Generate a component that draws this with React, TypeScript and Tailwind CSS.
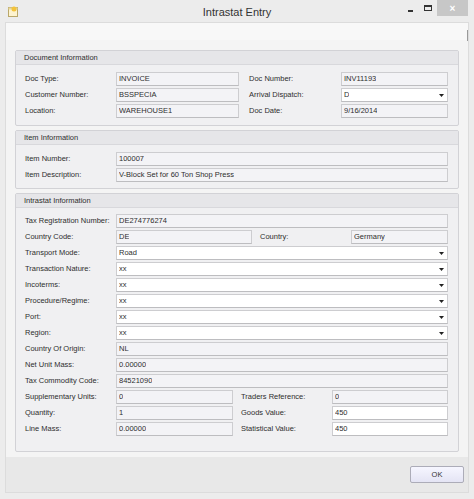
import React from "react";

type Cell = { label: string; value: string; kind?: "ro" | "edit" | "combo"; w?: string; lw?: string; gap?: string };

const font = { fontFamily: '"Liberation Sans", Arial, sans-serif' };

function Field({ value, kind = "ro", className = "" }: { value: string; kind?: "ro" | "edit" | "combo"; className?: string }) {
  const bg = kind === "ro" ? "bg-[#f3f3f6]" : "bg-white";
  return (
    <div className={`relative h-[14px] border border-[#cdcdd0] border-b-[#bdbdc0] ${bg} flex items-center pl-[2px] text-[7.5px] text-[#2e2e2e] ${className}`}>
      <span className="truncate">{value}</span>
      {kind === "combo" && (
        <svg className="absolute right-[3px] top-[5px]" width="5" height="3" viewBox="0 0 5 3">
          <path d="M0 0 L5 0 L2.5 3 Z" fill="#222" />
        </svg>
      )}
    </div>
  );
}

function Label({ text, className = "w-[91px]" }: { text: string; className?: string }) {
  return <div className={`${className} shrink-0 text-[7.5px] text-[#2e2e2e] leading-[14px]`}>{text}</div>;
}

function Row({ label, value, kind }: Cell) {
  return (
    <div className="flex items-center h-[14px]">
      <Label text={label} />
      <Field value={value} kind={kind} className="flex-1" />
    </div>
  );
}

function Pair({ left, right }: { left: Cell; right: Cell }) {
  return (
    <div className="flex items-center h-[14px]">
      <Label text={left.label} />
      <Field value={left.value} kind={left.kind} className={`${left.w} shrink-0`} />
      <Label text={right.label} className={`${right.lw} ${right.gap}`} />
      <Field value={right.value} kind={right.kind} className="flex-1" />
    </div>
  );
}

function Group({ title, children, pt, pb }: { title: string; children: React.ReactNode; pt: string; pb: string }) {
  return (
    <div className="border border-[#d2d2d6] rounded-[2px] bg-[#f0f0f2]">
      <div className="h-[14px] bg-[#e6e6e9] border-b border-[#d8d8dc] pl-[8px] text-[7.5px] text-[#2e2e2e] leading-[14px]">{title}</div>
      <div className={`flex flex-col gap-[2px] pl-[9px] pr-[10px] ${pt} ${pb}`}>{children}</div>
    </div>
  );
}

export default function App() {
  return (
    <div className="w-[474px] h-[499px] bg-[#ececec] flex flex-col" style={font}>
      {/* title bar */}
      <div className="h-[22px] flex items-center relative shrink-0">
        <svg className="ml-[7px]" width="12" height="12" viewBox="0 0 12 12">
          <rect x="1.5" y="2.5" width="9" height="9" fill="#fdf3cf" stroke="#b9a76a" />
          <rect x="1.5" y="2.5" width="9" height="2" fill="#e8d89a" />
          <circle cx="7" cy="4" r="2.5" fill="#f3c33b" />
        </svg>
        <div className="absolute left-0 right-0 text-center text-[11px] text-[#333] top-[4px]">Intrastat Entry</div>
        <div className="ml-auto flex items-start h-full">
          <div className="w-[17px] h-[16px] flex items-center justify-center">
            <div className="w-[5px] h-[2px] bg-[#333] mt-[5px]" />
          </div>
          <div className="w-[18px] h-[16px] flex items-center justify-center">
            <div className="w-[8px] h-[6px] border border-[#333] border-t-2" />
          </div>
          <div className="w-[31px] h-[16px] bg-[#c7c7c7] flex items-center justify-center text-white text-[10px] font-bold mr-[6px]">×</div>
        </div>
      </div>
      {/* body */}
      <div className="flex-1 mx-[5px] mb-[6px] bg-[#f4f4f4] border border-[#dcdcdc] flex flex-col relative">
        <div className="absolute right-[0px] top-[7px] w-[1px] h-[11px] bg-[#9a9a9a]" />
        <div className="h-[17px] bg-[#f8f8f8]" />
        <div className="flex flex-col gap-[4px] px-[9px] pt-[10px]">
          <Group title="Document Information" pt="pt-[7px]" pb="pb-[7px]">
            <Pair left={{ label: "Doc Type:", value: "INVOICE", w: "w-[123px]" }} right={{ label: "Doc Number:", value: "INV11193", lw: "w-[92px]", gap: "ml-[10px]" }} />
            <Pair left={{ label: "Customer Number:", value: "BSSPECIA", w: "w-[123px]" }} right={{ label: "Arrival Dispatch:", value: "D", kind: "combo", lw: "w-[92px]", gap: "ml-[10px]" }} />
            <Pair left={{ label: "Location:", value: "WAREHOUSE1", w: "w-[123px]" }} right={{ label: "Doc Date:", value: "9/16/2014", lw: "w-[92px]", gap: "ml-[10px]" }} />
          </Group>
          <Group title="Item Information" pt="pt-[7px]" pb="pb-[6px]">
            <Row label="Item Number:" value="100007" />
            <Row label="Item Description:" value="V-Block Set for 60 Ton Shop Press" />
          </Group>
          <Group title="Intrastat Information" pt="pt-[6px]" pb="pb-[15px]">
            <Row label="Tax Registration Number:" value="DE274776274" />
            <Pair left={{ label: "Country Code:", value: "DE", w: "w-[136px]" }} right={{ label: "Country:", value: "Germany", lw: "w-[91px]", gap: "ml-[8px]" }} />
            <Row label="Transport Mode:" value="Road" kind="combo" />
            <Row label="Transaction Nature:" value="xx" kind="combo" />
            <Row label="Incoterms:" value="xx" kind="combo" />
            <Row label="Procedure/Regime:" value="xx" kind="combo" />
            <Row label="Port:" value="xx" kind="combo" />
            <Row label="Region:" value="xx" kind="combo" />
            <Row label="Country Of Origin:" value="NL" />
            <Row label="Net Unit Mass:" value="0.00000" />
            <Row label="Tax Commodity Code:" value="84521090" />
            <Pair left={{ label: "Supplementary Units:", value: "0", w: "w-[117px]" }} right={{ label: "Traders Reference:", value: "0", lw: "w-[91px]", gap: "ml-[8px]" }} />
            <Pair left={{ label: "Quantity:", value: "1", w: "w-[117px]" }} right={{ label: "Goods Value:", value: "450", kind: "edit", lw: "w-[91px]", gap: "ml-[8px]" }} />
            <Pair left={{ label: "Line Mass:", value: "0.00000", w: "w-[117px]" }} right={{ label: "Statistical Value:", value: "450", kind: "edit", lw: "w-[91px]", gap: "ml-[8px]" }} />
          </Group>
        </div>
        <div className="flex-1 mt-[4px] bg-[#e8e8e8] border-t border-[#f4f4f4] flex items-center justify-end pr-[4px]">
          <button className="w-[54px] h-[17px] border border-[#acacb8] rounded-[2px] bg-gradient-to-b from-[#f6f6ff] to-[#e4e4f4] text-[7.5px] text-[#333]" style={font}>
            OK
          </button>
        </div>
      </div>
    </div>
  );
}
